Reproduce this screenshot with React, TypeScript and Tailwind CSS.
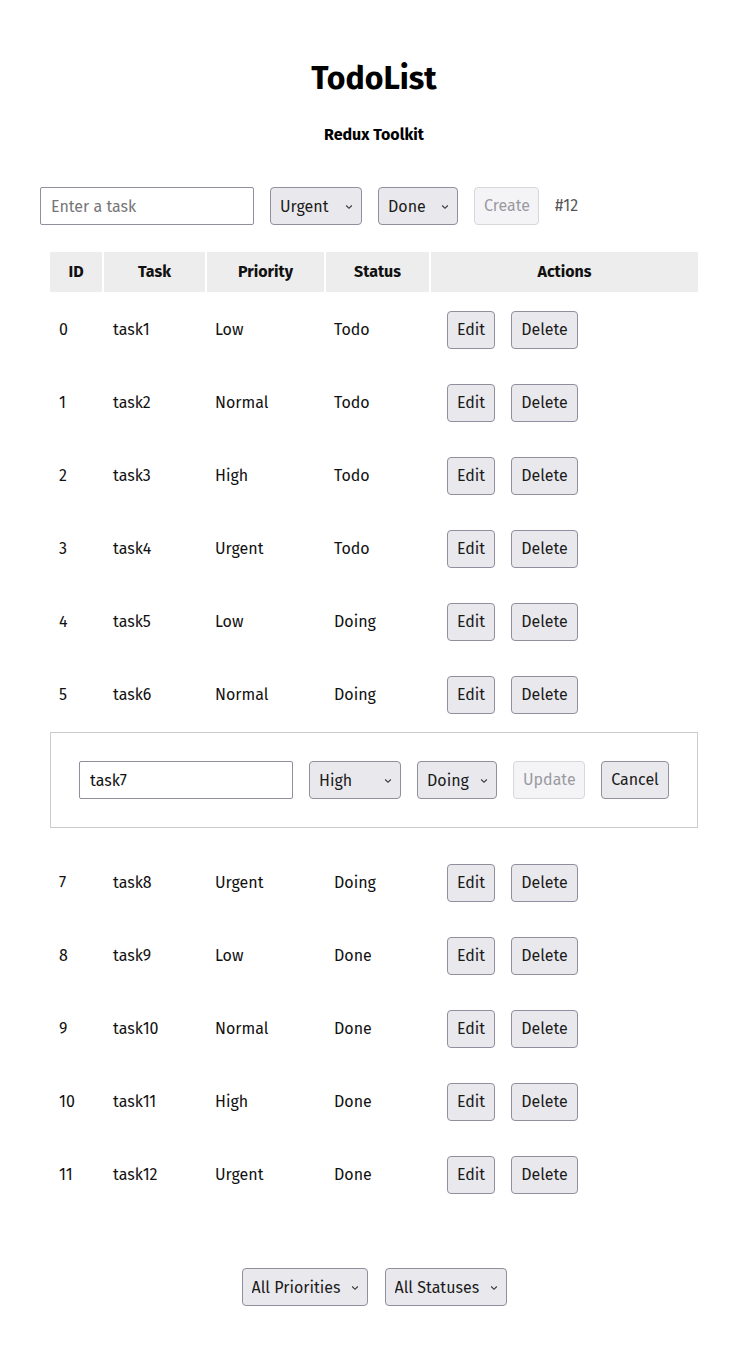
import React from 'react';

const tasks = [
  { id: 0, name: 'task1', priority: 'Low', status: 'Todo' },
  { id: 1, name: 'task2', priority: 'Normal', status: 'Todo' },
  { id: 2, name: 'task3', priority: 'High', status: 'Todo' },
  { id: 3, name: 'task4', priority: 'Urgent', status: 'Todo' },
  { id: 4, name: 'task5', priority: 'Low', status: 'Doing' },
  { id: 5, name: 'task6', priority: 'Normal', status: 'Doing' },
  { id: 6, name: 'task7', priority: 'High', status: 'Doing' },
  { id: 7, name: 'task8', priority: 'Urgent', status: 'Doing' },
  { id: 8, name: 'task9', priority: 'Low', status: 'Done' },
  { id: 9, name: 'task10', priority: 'Normal', status: 'Done' },
  { id: 10, name: 'task11', priority: 'High', status: 'Done' },
  { id: 11, name: 'task12', priority: 'Urgent', status: 'Done' },
];

const btn =
  'h-[38px] px-[9px] rounded-[4px] border border-[#8f8f9d] bg-[#e9e9ed] text-[#1b1b1b] text-base leading-none';
const btnDisabled =
  'h-[38px] px-[9px] rounded-[4px] border border-[#d7d7db] bg-[#f4f4f6] text-[#9a9aa2] text-base leading-none';

function Select({ value, width, options }: { value: string; width: string; options: string[] }) {
  return (
    <div className={`relative h-[38px] ${width}`}>
      <select
        defaultValue={value}
        className="appearance-none w-full h-full pl-[9px] pr-6 pt-[1px] rounded-[4px] border border-[#8f8f9d] bg-[#e9e9ed] text-[#1b1b1b] text-base outline-none"
      >
        {options.map((o) => (
          <option key={o}>{o}</option>
        ))}
      </select>
      <svg
        className="pointer-events-none absolute right-[9px] top-[17px]"
        width="8"
        height="6"
        viewBox="0 0 8 6"
        fill="none"
      >
        <path d="M1.2 1.5 L4 4.3 L6.8 1.5" stroke="#333" strokeWidth="1.1" />
      </svg>
    </div>
  );
}

const priorities = ['Low', 'Normal', 'High', 'Urgent'];
const statuses = ['Todo', 'Doing', 'Done'];

export default function App() {
  return (
    <div className="min-h-[1363px] bg-white text-black text-base px-10 pt-[54px]" style={{ fontFamily: '"Fira Sans", Lato, sans-serif' }}>
      <h1 className="text-center text-[32px] font-bold leading-[48px]">TodoList</h1>
      <h4 className="text-center font-bold mt-[23px] leading-5">Redux Toolkit</h4>

      <div className="flex items-center gap-4 mt-[42px]">
        <input
          placeholder="Enter a task"
          className="w-[214px] h-[38px] px-[10px] border border-[#8f8f9d] rounded-[2px] text-base placeholder:text-[#767676] outline-none"
        />
        <Select value="Urgent" width="w-[92px]" options={priorities} />
        <Select value="Done" width="w-[80px]" options={statuses} />
        <button disabled className={btnDisabled + ' w-[65px]'}>Create</button>
        <span className="text-[#555]">#12</span>
      </div>

      <table className="mx-auto mt-[25px] border-separate border-spacing-[2px] w-[651px] text-[#111]">
        <thead>
          <tr className="h-[40px]">
            <th className="w-[52px] bg-[#ededed] font-bold">ID</th>
            <th className="w-[101px] bg-[#ededed] font-bold">Task</th>
            <th className="w-[117px] bg-[#ededed] font-bold">Priority</th>
            <th className="w-[103px] bg-[#ededed] font-bold">Status</th>
            <th className="bg-[#ededed] font-bold">Actions</th>
          </tr>
        </thead>
        <tbody>
          {tasks.map((t) =>
            t.id === 6 ? (
              <tr key={t.id}>
                <td colSpan={5} className="p-0 pb-[17px]">
                  <div className="border border-[#cccccc] px-[28px] py-[28px] flex items-center gap-4">
                    <input
                      defaultValue="task7"
                      className="w-[214px] h-[38px] px-[10px] border border-[#8f8f9d] rounded-[2px] text-base outline-none"
                    />
                    <Select value="High" width="w-[92px]" options={priorities} />
                    <Select value="Doing" width="w-[80px]" options={statuses} />
                    <button disabled className={btnDisabled + ' w-[72px]'}>Update</button>
                    <button className={btn + ' w-[68px]'}>Cancel</button>
                  </div>
                </td>
              </tr>
            ) : (
              <tr key={t.id} className="h-[71px]">
                <td className="pl-[9px] pr-2">{t.id}</td>
                <td className="pl-[9px] pr-2">{t.name}</td>
                <td className="pl-[8px] pr-2">{t.priority}</td>
                <td className="pl-[8px] pr-2">{t.status}</td>
                <td className="pl-4">
                  <div className="flex items-center gap-4">
                    <button className={btn + ' w-[48px]'}>Edit</button>
                    <button className={btn + ' w-[67px]'}>Delete</button>
                  </div>
                </td>
              </tr>
            )
          )}
        </tbody>
      </table>

      <div className="flex justify-center gap-[17px] mt-[56px] pb-[57px]">
        <Select value="All Priorities" width="w-[126px]" options={['All Priorities', ...priorities]} />
        <Select value="All Statuses" width="w-[122px]" options={['All Statuses', ...statuses]} />
      </div>
    </div>
  );
}
